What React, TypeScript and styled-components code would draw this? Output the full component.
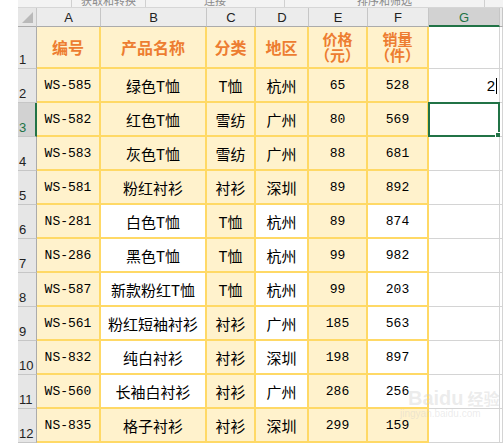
import React from "react";
import styled, { createGlobalStyle, css } from "styled-components";

const Global = createGlobalStyle`
  html, body { margin: 0; padding: 0; background: #ffffff; }
  body { width: 503px; height: 443px; overflow: hidden; font-family: "Liberation Sans", Arial, sans-serif; }
`;

const Page = styled.div`
  padding-left: 18px;
  width: 503px;
  height: 443px;
  box-sizing: border-box;
  position: relative;
  overflow: hidden;
`;

const Ribbon = styled.div`
  height: 8px;
  background: #f3f3f3;
  border-bottom: 1px solid #d6d6d6;
  box-sizing: border-box;
  display: grid;
  grid-template-columns: 54px 74px 139px 200px 1fr;
  overflow: hidden;
`;

const RibbonGroup = styled.div<{ $last?: boolean }>`
  border-right: ${(p) => (p.$last ? "none" : "1px solid #d0d0d0")};
  display: flex;
  justify-content: center;
  overflow: hidden;
`;

const RibbonLabel = styled.span`
  font-family: "Noto Sans CJK SC", sans-serif;
  font-size: 11px;
  line-height: 12px;
  color: #8a8a8a;
  margin-top: -6px;
  white-space: nowrap;
`;

const Sheet = styled.div`
  display: grid;
  grid-template-columns: 19px 64px 106px 49px 53px 59px 61px 71px 3px;
  grid-template-rows: 19px 42px repeat(11, 34px);
`;

const Corner = styled.div`
  background: #e6e6e6;
  border-right: 1px solid #c6c6c6;
  border-bottom: 1px solid #ababab;
  box-sizing: border-box;
  display: flex;
  align-items: flex-end;
  justify-content: flex-end;
  padding: 0 3px 3px 0;
`;

const Triangle = styled.div`
  width: 0;
  height: 0;
  border-left: 11px solid transparent;
  border-bottom: 11px solid #b9b9b9;
`;

const ColHead = styled.div<{ $sel?: boolean }>`
  background: ${(p) => (p.$sel ? "#d2d2d2" : "#ececec")};
  border-right: 1px solid #c6c6c6;
  border-bottom: ${(p) => (p.$sel ? "2px solid #217346" : "1px solid #ababab")};
  box-sizing: border-box;
  display: flex;
  align-items: center;
  justify-content: center;
  font-size: 13px;
  color: ${(p) => (p.$sel ? "#217346" : "#222")};
  padding-top: 1px;
`;

const RowHead = styled.div<{ $sel?: boolean }>`
  background: ${(p) => (p.$sel ? "#d2d2d2" : "#e6e6e6")};
  border-bottom: 1px solid #c6c6c6;
  border-right: ${(p) => (p.$sel ? "2px solid #217346" : "1px solid #ababab")};
  box-sizing: border-box;
  display: flex;
  align-items: flex-end;
  justify-content: flex-start;
  font-size: 13px;
  color: ${(p) => (p.$sel ? "#217346" : "#222")};
  padding: 0 0 1px 1px;
  white-space: nowrap;
`;

type Kind = "head" | "mono" | "cjk";

const Cell = styled.div<{ $white?: boolean; $kind: Kind }>`
  background: ${(p) => (p.$white ? "#ffffff" : "#fff2cc")};
  border-right: 2px solid #ffd966;
  border-bottom: 2px solid #ffd966;
  box-sizing: border-box;
  display: flex;
  flex-direction: column;
  align-items: center;
  justify-content: center;
  text-align: center;
  white-space: nowrap;
  color: #000;
  ${(p) =>
    p.$kind === "head"
      ? css`
          font-family: "Noto Sans CJK SC", sans-serif;
          font-weight: 700;
          font-size: 16px;
          line-height: 17px;
          color: #ed7d31;
        `
      : p.$kind === "mono"
      ? css`
          font-family: "Liberation Mono", monospace;
          font-size: 13px;
        `
      : css`
          font-family: "Noto Sans CJK SC", sans-serif;
          font-size: 15px;
        `}
`;

const HeadLine = styled.span`
  display: block;
  font-size: 15px;
  line-height: 16px;
  height: 16px;
  overflow: visible;
`;

const Blank = styled.div<{ $sel?: boolean }>`
  background: #ffffff;
  border-bottom: 1px solid #d4d4d4;
  border-right: 1px solid #d4d4d4;
  box-sizing: border-box;
  position: relative;
  display: flex;
  align-items: center;
  justify-content: flex-end;
  font-size: 15px;
  font-family: "Liberation Sans", Arial, sans-serif;
  padding-right: 2px;
  ${(p) =>
    p.$sel &&
    css`
      border: 2px solid #217346;
      margin: -1px 0 0 -1px;
    `}
`;

const Caret = styled.span`
  display: inline-block;
  width: 1px;
  height: 16px;
  background: #000;
  margin-left: 1px;
`;

const Handle = styled.span`
  position: absolute;
  right: -4px;
  bottom: -4px;
  width: 5px;
  height: 5px;
  background: #217346;
  border: 1px solid #fff;
`;

const Watermark = styled.div`
  position: absolute;
  left: 408px;
  top: 388px;
  display: flex;
  flex-direction: column;
  align-items: flex-start;
  pointer-events: none;
  color: rgba(205, 205, 205, 0.38);
`;

const WmMain = styled.div`
  font-family: "Liberation Sans", Arial, sans-serif;
  font-weight: 700;
  font-size: 20px;
  line-height: 20px;
  display: flex;
  gap: 4px;
`;

const WmSub = styled.div`
  font-family: "Liberation Sans", Arial, sans-serif;
  font-size: 10px;
  line-height: 12px;
  margin-left: -8px;
`;

const WmCjk = styled.span`
  font-family: "Noto Sans CJK SC", sans-serif;
  font-size: 16px;
  font-weight: 700;
`;

type Row = [string, string, string, string, string, string];

const rows: Row[] = [
  ["WS-585", "绿色T恤", "T恤", "杭州", "65", "528"],
  ["WS-582", "红色T恤", "雪纺", "广州", "80", "569"],
  ["WS-583", "灰色T恤", "雪纺", "广州", "88", "681"],
  ["WS-581", "粉红衬衫", "衬衫", "深圳", "89", "892"],
  ["NS-281", "白色T恤", "T恤", "杭州", "89", "874"],
  ["NS-286", "黑色T恤", "T恤", "杭州", "99", "982"],
  ["WS-587", "新款粉红T恤", "T恤", "杭州", "99", "203"],
  ["WS-561", "粉红短袖衬衫", "衬衫", "广州", "185", "563"],
  ["NS-832", "纯白衬衫", "衬衫", "深圳", "198", "897"],
  ["WS-560", "长袖白衬衫", "衬衫", "广州", "286", "256"],
  ["NS-835", "格子衬衫", "衬衫", "深圳", "299", "159"],
];

const letters = ["A", "B", "C", "D", "E", "F", "G", ""];

export default function App() {
  return (
    <>
      <Global />
      <Page>
        <Ribbon>
          <RibbonGroup />
          <RibbonGroup>
            <RibbonLabel>获取和转换</RibbonLabel>
          </RibbonGroup>
          <RibbonGroup>
            <RibbonLabel>连接</RibbonLabel>
          </RibbonGroup>
          <RibbonGroup>
            <RibbonLabel>排序和筛选</RibbonLabel>
          </RibbonGroup>
          <RibbonGroup $last />
        </Ribbon>
        <Sheet>
          <Corner>
            <Triangle />
          </Corner>
          {letters.map((l, i) => (
            <ColHead key={i} $sel={l === "G"}>
              {l}
            </ColHead>
          ))}

          <RowHead>1</RowHead>
          <Cell $kind="head">编号</Cell>
          <Cell $kind="head">产品名称</Cell>
          <Cell $kind="head">分类</Cell>
          <Cell $kind="head">地区</Cell>
          <Cell $kind="head">
            <HeadLine>价格</HeadLine>
            <HeadLine>（元）</HeadLine>
          </Cell>
          <Cell $kind="head">
            <HeadLine>销量</HeadLine>
            <HeadLine>（件）</HeadLine>
          </Cell>
          <Blank />
          <Blank />

          {rows.map((r, i) => {
            const n = i + 2;
            const white = n >= 6 && n <= 11;
            return (
              <React.Fragment key={n}>
                <RowHead $sel={n === 3}>{n}</RowHead>
                <Cell $kind="mono">{r[0]}</Cell>
                <Cell $kind="cjk" $white={white}>{r[1]}</Cell>
                <Cell $kind="cjk">{r[2]}</Cell>
                <Cell $kind="cjk" $white={white}>{r[3]}</Cell>
                <Cell $kind="mono">{r[4]}</Cell>
                <Cell $kind="mono" $white={white}>{r[5]}</Cell>
                {n === 2 ? (
                  <Blank>
                    2<Caret />
                  </Blank>
                ) : n === 3 ? (
                  <Blank $sel>
                    <Handle />
                  </Blank>
                ) : (
                  <Blank />
                )}
                <Blank />
              </React.Fragment>
            );
          })}
        </Sheet>
        <Watermark>
          <WmMain>
            <span>Baidu</span>
            <WmCjk>经验</WmCjk>
          </WmMain>
          <WmSub>jingyan.baidu.com</WmSub>
        </Watermark>
      </Page>
    </>
  );
}
